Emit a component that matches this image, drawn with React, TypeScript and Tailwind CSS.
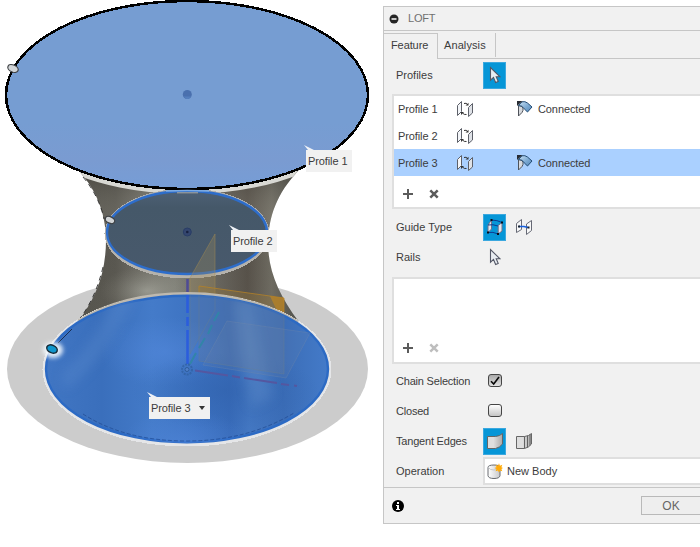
import React from "react";

function Cursor() {
  return (
    <svg width="12" height="18" viewBox="0 0 12 18">
      <path d="M1.5 1.5V14.2L4.5 11.4L6.6 16.5L9.2 15.4L7.2 10.7H10.8Z" fill="#e9edf2" stroke="#535766" strokeWidth="1.1" />
    </svg>
  );
}

function FlipIcon() {
  return (
    <svg width="18" height="18" viewBox="0 0 18 18" className="shrink-0">
      <path d="M1.5 5.5L5.5 1.5V11.5L1.5 15.5Z" fill="#f3f5f8" stroke="#5d6069" />
      <path d="M12.5 7.5L16.5 3.5V13L12.5 16.5Z" fill="#dfe2e7" stroke="#5d6069" />
      <path d="M8 3.5Q10.5 2.5 11.5 4.5M10.5 14.5Q8 15 6.5 13" fill="none" stroke="#333" />
      <path d="M9.5 5.5H12.5V2.8ZM8 12H5V15Z" fill="#333" />
    </svg>
  );
}

function ConnectedIcon() {
  return (
    <svg width="16" height="17" viewBox="0 0 16 17" className="shrink-0">
      <defs><linearGradient id="fold" x1="0" y1="0" x2="1" y2="1"><stop stopColor="#cfe4f5" /><stop offset=".5" stopColor="#83afd6" /><stop offset="1" stopColor="#4d82b4" /></linearGradient></defs>
      <path d="M1.5 5.5Q5 5.5 6 8Q6.5 10.5 5 12.5L1.5 16Z" fill="#d7dade" stroke="#4e5259" />
      <path d="M1.5 5.5L5 1.8Q8 1 10.5 3L15 7L10.5 12L7.2 8.8Q5.8 5.5 1.5 5.5Z" fill="url(#fold)" stroke="#234c74" />
      <path d="M0 1H5.5L0 6Z" fill="#262b33" />
    </svg>
  );
}

function RailsIcon() {
  return (
    <svg width="18" height="18" viewBox="0 0 18 18">
      <path d="M2 7L5.5 2V11L2 14.5ZM12.2 7.5L16 4.5V13L12.2 16Z" fill="#e5e6ec" stroke="#71708a" />
      <path d="M5.5 2Q11 2 16 4.5M2 14.5Q7 13.5 12 16M2 7Q7 6 12 8" fill="none" stroke="#0d3b91" />
      <path d="M4.5 1h2v2h-2zM15 3.5h2v2h-2zM1 13.5h2v2H1zM11 15h2v2h-2z" fill="#0a0c16" />
    </svg>
  );
}

function CenterlineIcon() {
  return (
    <svg width="18" height="18" viewBox="0 0 18 18">
      <path d="M1.5 5.5L6.5 1.5V11.5L1.5 14.5ZM11.5 6L16.5 2.5V12.5L11.5 16.5Z" fill="#f8f8f8" stroke="#666975" />
      <path d="M4 8.5H9L13 9.5" fill="none" stroke="#1760df" strokeWidth="1.6" />
      <path d="M3 7.5h2v2H3zM12.5 8.5h2v2h-2z" fill="#172030" />
    </svg>
  );
}

function TangentIcon({ split = false }: { split?: boolean }) {
  return (
    <svg width="18" height="18" viewBox="0 0 18 18">
      <defs>
        <linearGradient id={split ? "faceB" : "faceA"}>
          <stop offset=".4" stopColor="#dedede" /><stop offset="1" stopColor="#a9a9a9" />
        </linearGradient>
      </defs>
      <path d="M1.5 4.5H9.5Q14 4 16.5 1.5V12Q14 15.5 9.5 16.5H1.5Z" fill={split ? "url(#faceB)" : "url(#faceA)"} stroke="#666" />
      {split && <path d="M9.5 4.5V16.5M12.5 3.8V15.5M15 2.5V13.5" fill="none" stroke="#626262" />}
    </svg>
  );
}

function BodyIcon() {
  return (
    <svg width="17" height="17" viewBox="0 0 17 17" className="shrink-0">
      <defs><linearGradient id="bodyFill"><stop stopColor="#fff" /><stop offset="1" stopColor="#c8c9cb" /></linearGradient></defs>
      <path d="M2 4.5Q2 2 8 2Q14 2 14 4.5V12.7Q13.5 15.5 8 15.5Q2.5 15.5 2 12.7Z" fill="url(#bodyFill)" stroke="#686b70" />
      <path d="M2.5 4.5Q3.5 7 8 7Q12.5 7 13.5 4.5" fill="none" stroke="#c5c7ca" />
      <path d="M13 .3L13.9 2.7L16.3 1.8L15.4 4.2L17 5L15.4 5.9L16.3 8.3L13.9 7.4L13 9.8L12 7.4L9.6 8.3L10.5 5.9L8.3 5L10.5 4.2L9.6 1.8L12 2.7Z" fill="#ffab0a" />
    </svg>
  );
}

function Controls({ disabled = false }: { disabled?: boolean }) {
  return (
    <svg width="40" height="12" viewBox="0 0 40 12">
      <path d="M6 1V11M1 6H11" stroke="#5b5b5b" strokeWidth="2" fill="none" />
      <path d="M28.3 2.3L35.7 9.7M35.7 2.3L28.3 9.7" stroke={disabled ? "#bebebe" : "#5b5b5b"} strokeWidth="2.5" fill="none" />
    </svg>
  );
}

function Checkbox({ checked = false }: { checked?: boolean }) {
  return (
    <div className={`-mt-px ml-[5px] flex h-[13px] w-[14px] items-center justify-center rounded-[3px] border border-[#454545] bg-linear-to-b ${checked ? "from-[#aaa] to-[#e1e1e1]" : "from-white to-[#c5c5c5]"}`}>
      {checked && <svg width="12" height="12" viewBox="0 0 12 12"><path d="M2 6.2L4.7 9L10 2" fill="none" stroke="#080808" strokeWidth="1.6" /></svg>}
    </div>
  );
}

function Selected({ children }: { children: React.ReactNode }) {
  return <div className="flex h-[27px] w-[23px] items-center justify-center border border-[#3ba8df] bg-[#0696d7]">{children}</div>;
}

function Field({ label, tight, children }: { label: string; tight?: boolean; children?: React.ReactNode }) {
  return (
    <div className="flex h-[30px] items-center pl-3">
      <div className={`w-[87px] shrink-0 ${tight ? "tracking-[-0.2px]" : ""}`}>{label}</div>
      {children}
    </div>
  );
}

function ProfileRow({ name, connected, selected }: { name: string; connected?: boolean; selected?: boolean }) {
  return (
    <div className={`flex h-[27px] items-center pl-1 ${selected ? "bg-[#aad0ff]" : ""}`}>
      <div className="w-[58px] tracking-[-0.1px]">{name}</div>
      <FlipIcon />
      {connected && <div className="ml-[43px] flex items-center gap-[5px] tracking-[-0.1px]"><ConnectedIcon /><span>Connected</span></div>}
    </div>
  );
}

function Model() {
  return (
    <svg width="383" height="547" viewBox="0 0 383 547" className="absolute inset-0">
      <defs>
        <linearGradient id="metal" x1="78" x2="298" gradientUnits="userSpaceOnUse">
          <stop stopColor="#55534c" /><stop offset=".17" stopColor="#5b5952" /><stop offset=".34" stopColor="#7e7d75" /><stop offset=".44" stopColor="#85867d" /><stop offset=".56" stopColor="#74736c" /><stop offset=".77" stopColor="#58524a" /><stop offset=".88" stopColor="#716e64" /><stop offset="1" stopColor="#4f4f49" />
        </linearGradient>
        <linearGradient id="metalShade" x1="0" x2="0" y1="175" y2="300" gradientUnits="userSpaceOnUse">
          <stop stopColor="#3e3b34" stopOpacity=".35" /><stop offset=".35" stopColor="#aaa99e" stopOpacity=".15" /><stop offset=".65" stopColor="#4b4941" stopOpacity=".1" /><stop offset="1" stopColor="#5b5a52" stopOpacity=".15" />
        </linearGradient>
        <radialGradient id="metalGlow"><stop stopColor="#b4b6ac" stopOpacity=".55" /><stop offset="1" stopColor="#8b8a80" stopOpacity="0" /></radialGradient>
        <linearGradient id="topFill" x1="0" x2="0" y1="0" y2="1"><stop stopColor="#769dd2" /><stop offset=".65" stopColor="#769dd2" /><stop offset=".85" stopColor="#7a9bd1" /><stop offset="1" stopColor="#769dd6" /></linearGradient>
        <linearGradient id="midFill" x1="0" x2="0" y1="0" y2="1"><stop stopColor="#4d6075" /><stop offset=".2" stopColor="#455869" /><stop offset="1" stopColor="#48596c" /></linearGradient>
        <linearGradient id="baseFill" x1="45" x2="329" gradientUnits="userSpaceOnUse">
          <stop stopColor="#4176c3" /><stop offset=".2" stopColor="#3a6fbc" /><stop offset=".38" stopColor="#447bc9" /><stop offset=".52" stopColor="#3d73c2" /><stop offset=".65" stopColor="#386bb9" /><stop offset=".72" stopColor="#4377c2" /><stop offset=".84" stopColor="#3b6db7" /><stop offset="1" stopColor="#447bc9" />
        </linearGradient>
        <radialGradient id="blueGlow"><stop stopColor="#568be0" stopOpacity=".5" /><stop offset="1" stopColor="#568be0" stopOpacity="0" /></radialGradient>
        <radialGradient id="blueShade"><stop stopColor="#2f60aa" stopOpacity=".5" /><stop offset="1" stopColor="#2f60aa" stopOpacity="0" /></radialGradient>
        <filter id="soft" x="-50%" y="-50%" width="200%" height="200%"><feGaussianBlur stdDeviation="6" /></filter>
        <filter id="halo" x="-50%" y="-50%" width="200%" height="200%"><feGaussianBlur stdDeviation="2" /></filter>
        <filter id="edge"><feGaussianBlur stdDeviation=".7" /></filter>
        <clipPath id="bodyClip"><path d="M78 170C99 192 106 218 106 240C106 276 94 300 78 322L187 340L299 322C278 294 268 270 268 242C269 217 276 194 299 170Z" /></clipPath>
        <clipPath id="baseClip"><ellipse cx="187" cy="369" rx="141" ry="74" /></clipPath>
      </defs>
      <ellipse cx="187.5" cy="369" rx="180.5" ry="94" fill="#ccc" filter="url(#edge)" />
      <g clipPath="url(#bodyClip)">
        <path d="M70 165H305V335H70Z" fill="url(#metal)" />
        <path d="M70 165H305V335H70Z" fill="url(#metalShade)" />
        <ellipse cx="147" cy="291" rx="47" ry="25" fill="url(#metalGlow)" />
        <ellipse cx="187" cy="98" rx="181.5" ry="94" fill="none" stroke="#d8d8d3" strokeWidth="4.5" />
      </g>
      <path d="M83 177Q99 196 104 219M103 267C98 288 90 306 78 321" fill="none" stroke="#171717" strokeWidth=".8" strokeDasharray="5 4" />
      <ellipse cx="187" cy="233.5" rx="82.5" ry="45" fill="#b5b2ac" shapeRendering="crispEdges" />
      <ellipse cx="187" cy="232.5" rx="80" ry="41.5" fill="url(#midFill)" stroke="#2d6dcb" strokeWidth="2.4" />
      <path d="M190 279V278L215 234V304L190 340Z" fill="#a28c57" fillOpacity=".3" stroke="#a48c51" strokeOpacity=".45" />
      <path d="M199 286L284 298V322L199 312Z" fill="#9c7936" fillOpacity=".35" stroke="#b78325" strokeOpacity=".75" />
      <path d="M270 296L284 298V318L277 311Z" fill="#bd8521" fillOpacity=".7" />
      <path d="M187.5 279V295" stroke="#4f4b94" strokeWidth="2.5" />
      <ellipse cx="187" cy="369.5" rx="144.5" ry="77" fill="#e5e6e8" shapeRendering="crispEdges" />
      <path d="M78 321Q123 293.5 187 293.5Q251 293.5 298 322" fill="none" stroke="#beb9af" strokeWidth="3" />
      <ellipse cx="187" cy="369" rx="141" ry="73.3" fill="url(#baseFill)" stroke="#2c6ac4" strokeWidth="2.4" />
      <g clipPath="url(#baseClip)">
        <ellipse cx="165" cy="352" rx="64" ry="35" fill="url(#blueGlow)" />
        <ellipse cx="225" cy="391" rx="94" ry="39" fill="url(#blueShade)" />
        <ellipse cx="184" cy="446" rx="65" ry="37" fill="url(#blueGlow)" />
        <path d="M115 295Q96 342 61 375L66 390Q112 352 135 295Z" fill="#6694d4" opacity=".28" filter="url(#soft)" />
        <path d="M233 300L251 408L273 397L249 303Z" fill="#6290cd" opacity=".4" filter="url(#soft)" />
        <path d="M190 292V354L215 310V294M199 292V361L284 374V304" fill="#6c7a92" fillOpacity=".25" stroke="#687f8e" strokeOpacity=".4" />
        <path d="M227 321L310 333L286 378L203 365Z" fill="#7188a6" fillOpacity=".15" stroke="#778caa" strokeOpacity=".3" />
        <path d="M187.5 292V313M187.5 317V326M187.5 330V364" stroke="#2b5ddd" strokeWidth="2.5" />
        <path d="M219 312L214 321M212 325L208 334M205 338L199 348M196 353L190 364" stroke="#3284a8" strokeWidth="2" />
        <path d="M195 370.5L228 375.5M232 376L240 377.5M244 378L277 383M281 384L289 385M294 385.5L297 386" stroke="#5457a0" strokeWidth="1.8" />
        <path d="M58 343L72 329" stroke="#182e54" strokeWidth="1" />
        <path d="M83 414Q125 441 187 441Q247 441 294 413" fill="none" stroke="#1b438a" strokeDasharray="4 2" strokeWidth=".6" />
      </g>
      <g stroke="#2e5d9c" fill="none"><circle cx="187" cy="369.5" r="5" strokeWidth="2" strokeDasharray="2 1" opacity=".65" /><circle cx="187" cy="369.5" r="2" fill="#507fc9" /></g>
      <ellipse cx="187" cy="95" rx="181" ry="94" fill="url(#topFill)" stroke="#000" strokeWidth="2.5" shapeRendering="crispEdges" />
      <path d="M166 191Q187 190 209 191" fill="none" stroke="#7dace4" strokeWidth="1.5" />
      <path d="M177 192.8H198" stroke="#aaa9a2" />
      <circle cx="187.3" cy="94.5" r="4.5" fill="#4a70ae" /><path d="M183.3 96.5H191.3L188.3 99H186.3Z" fill="#557fbd" />
      <circle cx="187.3" cy="232" r="4" fill="#34466f" stroke="#293d66" /><circle cx="187.3" cy="232" r="1.3" fill="#17213f" />
      <g fill="#d1d4d6" stroke="#3e4144" strokeWidth="1.2">
        <ellipse cx="13" cy="68.5" rx="5.5" ry="3.5" transform="rotate(25 13 68.5)" />
        <ellipse cx="110" cy="220" rx="5" ry="3.2" transform="rotate(25 110 220)" />
      </g>
      <ellipse cx="53" cy="350" rx="10" ry="8" fill="#f4faff" opacity=".9" filter="url(#halo)" />
      <ellipse cx="52" cy="349" rx="5.5" ry="3.8" transform="rotate(25 52 349)" fill="#1096cd" stroke="#172c39" strokeWidth="1.5" />
      <path d="M304 145L314 150H308ZM229 225L239 230H233ZM147 392L157 397H151Z" fill="#eef1f6" />
    </svg>
  );
}

export default function App() {
  return (
    <main className="flex h-[547px] w-[700px] overflow-hidden bg-white font-['Liberation_Sans',Arial,sans-serif] text-[11px] leading-[14px] text-[#3c3c3c]">
      <section className="relative w-[383px] shrink-0">
        <Model />
        <div className="absolute left-[306px] top-[150px] flex h-[22px] w-[46px] items-center bg-[#f1f1f1] pl-[2px] tracking-[-0.1px]">Profile 1</div>
        <div className="absolute left-[231px] top-[230px] flex h-[22px] w-[46px] items-center bg-[#f1f1f1] pl-[2px] tracking-[-0.1px]">Profile 2</div>
        <div className="absolute left-[149px] top-[397px] flex h-[22px] w-[61px] items-center bg-[#f1f1f1] pl-[2px] tracking-[-0.1px]">
          <span className="w-[48px]">Profile 3</span><svg width="6" height="4"><path d="M0 0H6L3 4Z" fill="#333" /></svg>
        </div>
      </section>
      <section className="mt-[6px] flex h-[518px] w-[317px] flex-col border-y border-l border-[#c6c6c6] bg-[#f1f1f1]">
        <header className="flex h-6 shrink-0 items-center border-b border-[#c6c6c6] pl-[5px] text-[#707070]">
          <svg width="10" height="10" className="mr-[9px]"><circle cx="5" cy="5" r="4.5" fill="#252525" /><path d="M2.5 5H7.5" stroke="#fff" strokeWidth="1.5" /></svg>
          <span className="-mt-px tracking-[-0.2px]">LOFT</span>
        </header>
        <nav className="flex h-7 shrink-0 pt-[2px]">
          <div className="w-[54px] border-r border-t border-[#c6c6c6] pl-[7px] pt-[4px] tracking-[-0.1px]">Feature</div>
          <div className="flex-1 border-b border-[#c6c6c6]">
            <div className="h-6 w-[58px] border-r border-[#c6c6c6] pl-[6px] pt-[5px] tracking-[0.1px]">Analysis</div>
          </div>
        </nav>
        <div className="mt-px"><Field label="Profiles"><Selected><Cursor /></Selected></Field></div>
        <div className="ml-2 mt-[4px] h-[115px] shrink-0 border-y-2 border-l-2 border-[#dfdfdf] bg-white">
          <div className="-mt-px"><ProfileRow name="Profile 1" connected /><ProfileRow name="Profile 2" /><ProfileRow name="Profile 3" connected selected /></div>
          <div className="flex h-[35px] items-center pl-2"><Controls /></div>
        </div>
        <div className="mt-[3px]">
          <Field label="Guide Type"><Selected><RailsIcon /></Selected><div className="ml-[9px]"><CenterlineIcon /></div></Field>
          <Field label="Rails"><div className="ml-[6px]"><Cursor /></div></Field>
        </div>
        <div className="ml-2 mt-[5px] flex h-[87px] shrink-0 items-end border-y-2 border-l-2 border-[#dfdfdf] bg-white pb-2 pl-2"><Controls disabled /></div>
        <div className="mt-[2px]">
          <Field label="Chain Selection" tight><Checkbox checked /></Field>
          <Field label="Closed" tight><Checkbox /></Field>
          <Field label="Tangent Edges" tight><Selected><TangentIcon /></Selected><div className="ml-[9px]"><TangentIcon split /></div></Field>
          <Field label="Operation"><div className="flex h-7 flex-1 items-center gap-1 border-y-2 border-l-2 border-[#dfdfdf] bg-white pl-px"><BodyIcon />New Body</div></Field>
        </div>
        <footer className="mt-px flex flex-1 items-center border-t border-[#c6c6c6] pl-2">
          <svg width="12" height="12"><circle cx="6" cy="6" r="6" fill="#000" /><path d="M5 2H7V4H5ZM4 5H7V9H8V10H4V9H5V6H4Z" fill="#fff" /></svg>
          <div className="ml-auto flex h-[19px] w-[59px] items-center justify-center border-y border-l border-[#b9b9b9] bg-[#eee] text-xs text-[#666]">OK</div>
        </footer>
      </section>
    </main>
  );
}
